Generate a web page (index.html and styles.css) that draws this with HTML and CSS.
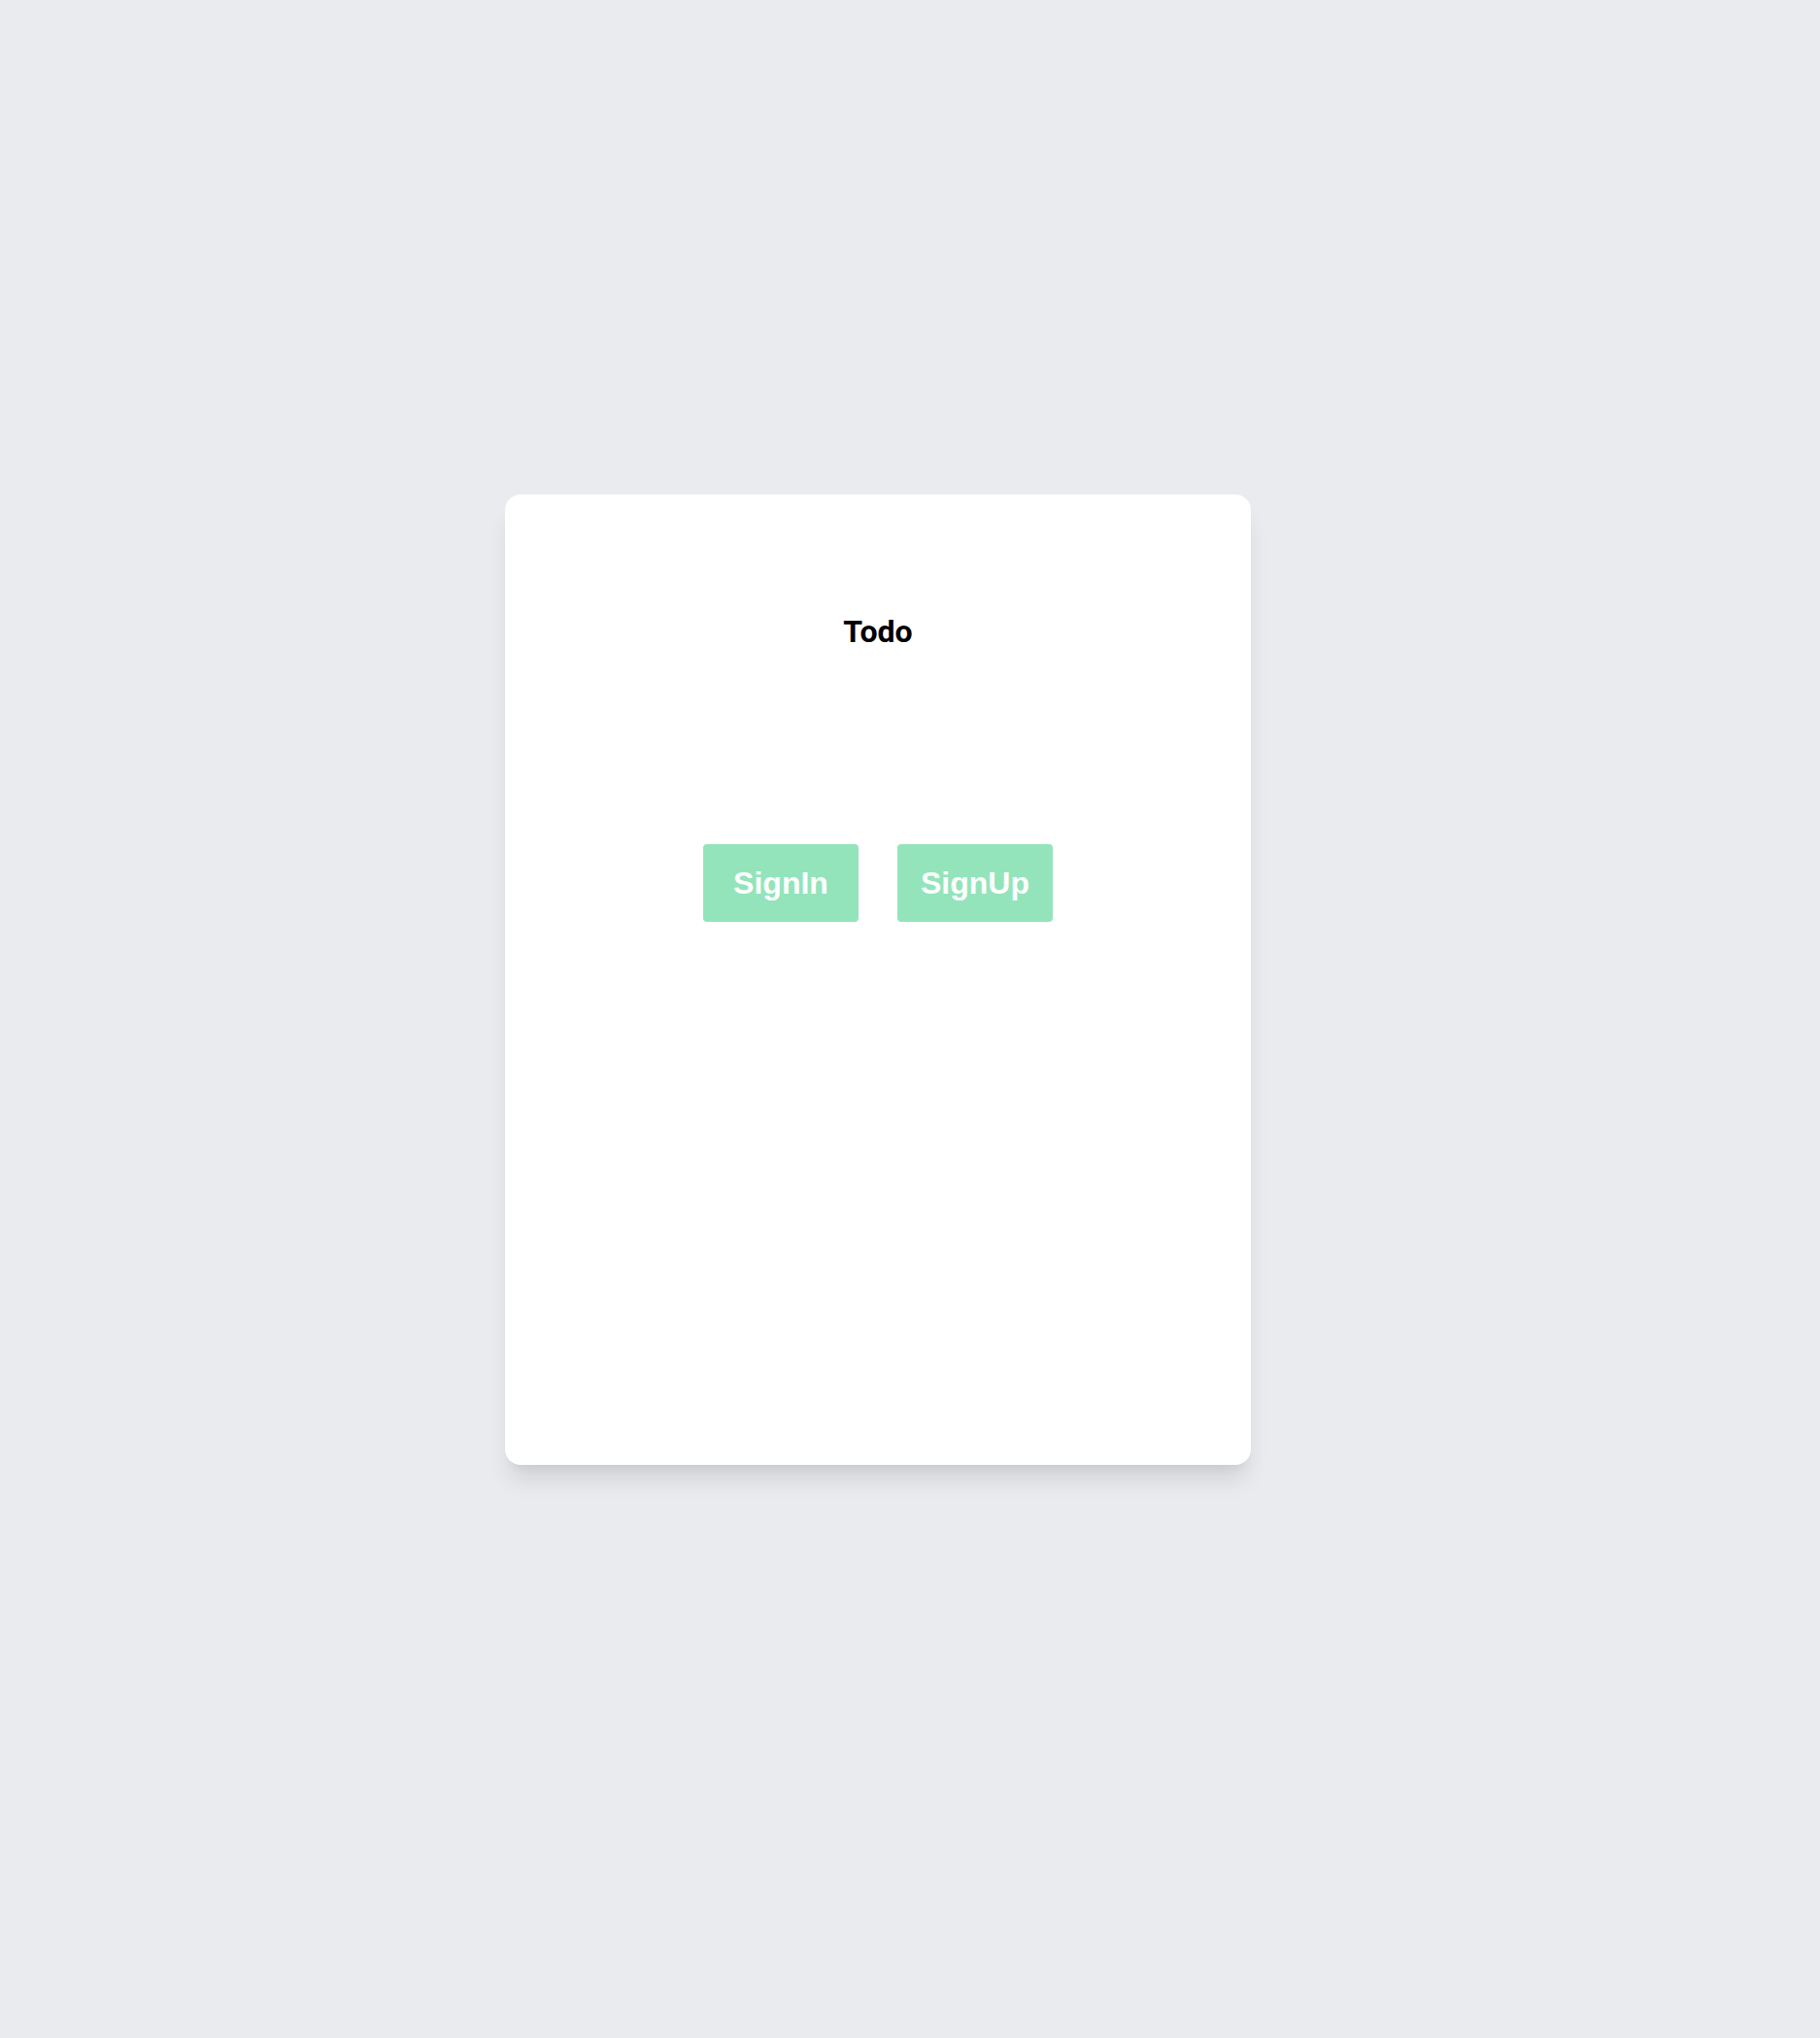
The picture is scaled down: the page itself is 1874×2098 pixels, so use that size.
FILE: index.html
```html
<!DOCTYPE html>
<html lang="en">
<head>
<meta charset="utf-8">
<title>Todo</title>
<link rel="stylesheet" href="styles.css">
</head>
<body>
<main class="page">
  <section class="card">
    <h1 class="title">Todo</h1>
    <div class="actions">
      <button class="btn" type="button">SignIn</button>
      <button class="btn" type="button">SignUp</button>
    </div>
  </section>
</main>
</body>
</html>
```
FILE: styles.css
```css
html, body {
  margin: 0;
  padding: 0;
}
body {
  background: #e9ebee;
  min-height: 2098px;
  font-family: Roboto, "Liberation Sans", Arial, sans-serif;
}
.page {
  display: flex;
  padding: 509px 0 0 520px;
}
.card {
  width: 768px;
  height: 999px;
  box-sizing: border-box;
  background: #ffffff;
  border-radius: 16px;
  box-shadow: 0 20px 25px -5px rgba(0, 0, 0, 0.1), 0 10px 10px -5px rgba(0, 0, 0, 0.04);
  padding-top: 121px;
  display: flex;
  flex-direction: column;
  align-items: center;
}
.title {
  margin: 0;
  font-size: 32px;
  line-height: 40px;
  font-weight: 700;
  color: #000;
}
.actions {
  margin-top: 199px;
  display: flex;
  gap: 40px;
}
.btn {
  width: 160px;
  height: 80px;
  border: 0;
  border-radius: 4px;
  background: #93e4bb;
  color: #ffffff;
  font-family: "Liberation Sans", Arial, sans-serif;
  font-size: 32px;
  font-weight: 700;
  padding: 0;
  cursor: pointer;
}
```
